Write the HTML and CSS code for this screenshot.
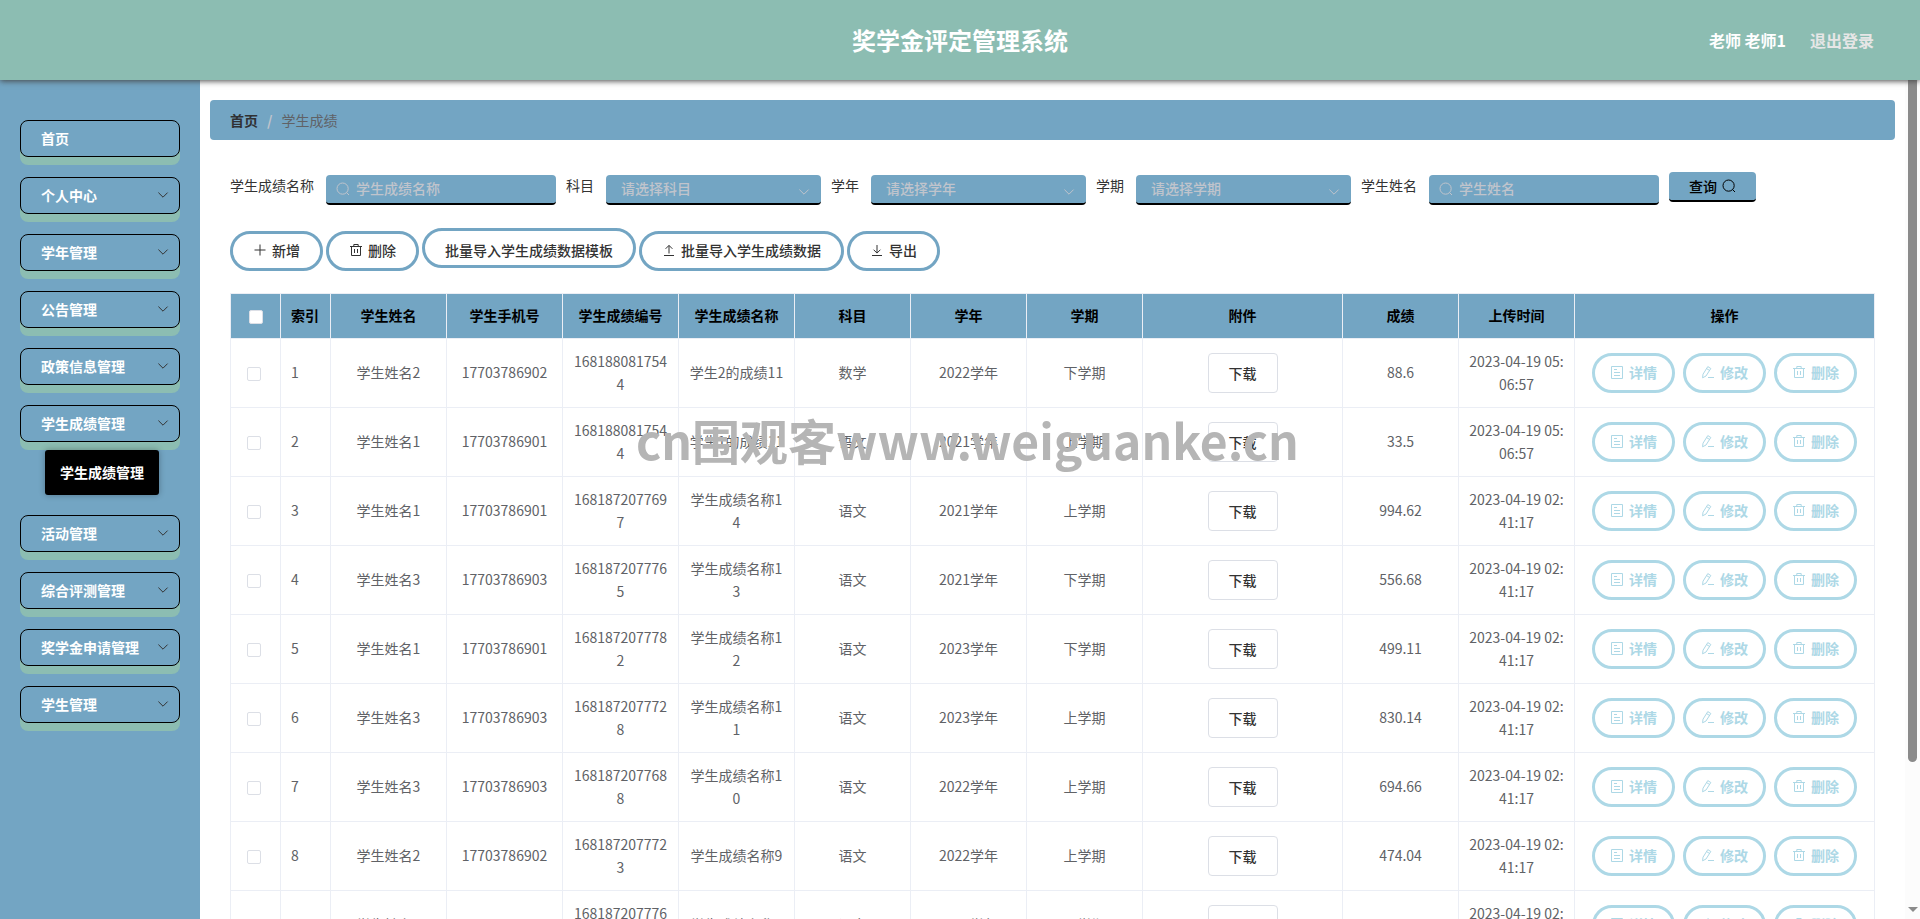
FILE: index.html
```html
<!DOCTYPE html>
<html lang="zh-CN">
<head>
    <meta charset="UTF-8">
    <meta name="viewport" content="width=device-width, initial-scale=1.0">
    <title>奖学金评定管理系统</title>
    <link rel="stylesheet" href="styles.css">
</head>
<body>
    <svg class="sprite" aria-hidden="true">
        <symbol id="i-down" viewBox="0 0 14 14"><path d="M2.4 4.6 7 9.2l4.6-4.6"/></symbol>
        <symbol id="i-search" viewBox="0 0 14 14"><circle cx="6.6" cy="6.6" r="5.6"/><path d="m10.6 10.6 2.4 2.4"/></symbol>
        <symbol id="i-plus" viewBox="0 0 14 14"><path d="M7 1.5v11M1.5 7h11"/></symbol>
        <symbol id="i-delete" viewBox="0 0 14 14"><path d="M1 3.5h12M4.8 3.5v-2h4.4v2M2.5 3.5v9h9v-9M5.5 6v4M8.5 6v4"/></symbol>
        <symbol id="i-upload" viewBox="0 0 14 14"><path d="M2 12.5h10M7 10.5v-8M3.6 5.8 7 2.4l3.4 3.4"/></symbol>
        <symbol id="i-download" viewBox="0 0 14 14"><path d="M2 12.5h10M7 2v8M3.6 6.7 7 10.1l3.4-3.4"/></symbol>
        <symbol id="i-tickets" viewBox="0 0 14 14"><path d="M1.5 1.5h11v12h-11zM4 4.5h3M4 7.5h6M4 10.5h6"/></symbol>
        <symbol id="i-edit" viewBox="0 0 14 14"><path d="M1.6 12.8 2 9.2l4.8-7.6 3 1.9L5 11zM5.6 3.6l3 1.9M7 12.5h6"/></symbol>
    </svg>

    <header class="header">
        <h1>奖学金评定管理系统</h1>
        <div class="user">
            <span>老师 老师1</span>
            <a href="#" class="logout">退出登录</a>
        </div>
    </header>

    <div class="layout">
        <nav class="sidebar">
            <a href="#" class="menu-item">首页</a>
            <button class="menu-item">个人中心<svg><use href="#i-down"/></svg></button>
            <button class="menu-item">学年管理<svg><use href="#i-down"/></svg></button>
            <button class="menu-item">公告管理<svg><use href="#i-down"/></svg></button>
            <button class="menu-item">政策信息管理<svg><use href="#i-down"/></svg></button>
            <div class="menu-group">
                <button class="menu-item">学生成绩管理<svg><use href="#i-down"/></svg></button>
                <a href="#" class="submenu-item">学生成绩管理</a>
            </div>
            <button class="menu-item">活动管理<svg><use href="#i-down"/></svg></button>
            <button class="menu-item">综合评测管理<svg><use href="#i-down"/></svg></button>
            <button class="menu-item">奖学金申请管理<svg><use href="#i-down"/></svg></button>
            <button class="menu-item">学生管理<svg><use href="#i-down"/></svg></button>
        </nav>

        <main class="main">
            <div class="breadcrumb">
                <a href="#">首页</a>
                <span class="separator">/</span>
                <span>学生成绩</span>
            </div>

            <div class="content">
                <form class="search-form">
                    <div class="field">
                        <label for="score-name">学生成绩名称</label>
                        <span class="control text-control">
                            <svg><use href="#i-search"/></svg>
                            <input type="text" id="score-name" placeholder="学生成绩名称">
                        </span>
                    </div>
                    <div class="field">
                        <label for="subject">科目</label>
                        <span class="control select-control">
                            <select id="subject"><option>请选择科目</option><option>语文</option><option>数学</option></select>
                            <svg><use href="#i-down"/></svg>
                        </span>
                    </div>
                    <div class="field">
                        <label for="year">学年</label>
                        <span class="control select-control">
                            <select id="year"><option>请选择学年</option><option>2021学年</option><option>2022学年</option><option>2023学年</option></select>
                            <svg><use href="#i-down"/></svg>
                        </span>
                    </div>
                    <div class="field">
                        <label for="term">学期</label>
                        <span class="control select-control">
                            <select id="term"><option>请选择学期</option><option>上学期</option><option>下学期</option></select>
                            <svg><use href="#i-down"/></svg>
                        </span>
                    </div>
                    <div class="field">
                        <label for="student-name">学生姓名</label>
                        <span class="control text-control">
                            <svg><use href="#i-search"/></svg>
                            <input type="text" id="student-name" placeholder="学生姓名">
                        </span>
                    </div>
                    <button type="submit" class="search-button">查询<svg><use href="#i-search"/></svg></button>
                </form>

                <div class="toolbar">
                    <button class="pill"><svg><use href="#i-plus"/></svg>新增</button>
                    <button class="pill"><svg><use href="#i-delete"/></svg>删除</button>
                    <a href="#" class="pill template-link">批量导入学生成绩数据模板</a>
                    <button class="pill"><svg><use href="#i-upload"/></svg>批量导入学生成绩数据</button>
                    <button class="pill"><svg><use href="#i-download"/></svg>导出</button>
                </div>

                <table class="table">
                    <colgroup>
                        <col class="col-small"><col class="col-small">
                        <col><col><col><col><col><col><col>
                        <col class="col-file"><col><col>
                        <col class="col-actions">
                    </colgroup>
                    <thead>
                        <tr>
                            <th class="check-all"><input type="checkbox" aria-label="全选"></th>
                            <th class="left">索引</th>
                            <th>学生姓名</th>
                            <th>学生手机号</th>
                            <th>学生成绩编号</th>
                            <th>学生成绩名称</th>
                            <th>科目</th>
                            <th>学年</th>
                            <th>学期</th>
                            <th>附件</th>
                            <th>成绩</th>
                            <th>上传时间</th>
                            <th>操作</th>
                        </tr>
                    </thead>
                    <tbody id="rows"></tbody>
                </table>
            </div>
        </main>

        <div class="scrollbar" aria-hidden="true">
            <div class="scrollbar-thumb"></div>
            <div class="scrollbar-arrow"></div>
        </div>
    </div>

    <div class="watermark">cn围观客www.weiguanke.cn</div>

    <script>
        const scores = [
            ['学生姓名2', '17703786902', '1681880817544', '学生2的成绩11', '数学', '2022学年', '下学期', '88.6', '2023-04-19 05:06:57'],
            ['学生姓名1', '17703786901', '1681880817544', '学生1的成绩11', '语文', '2021学年', '上学期', '33.5', '2023-04-19 05:06:57'],
            ['学生姓名1', '17703786901', '1681872077697', '学生成绩名称14', '语文', '2021学年', '上学期', '994.62', '2023-04-19 02:41:17'],
            ['学生姓名3', '17703786903', '1681872077765', '学生成绩名称13', '语文', '2021学年', '下学期', '556.68', '2023-04-19 02:41:17'],
            ['学生姓名1', '17703786901', '1681872077782', '学生成绩名称12', '语文', '2023学年', '下学期', '499.11', '2023-04-19 02:41:17'],
            ['学生姓名3', '17703786903', '1681872077728', '学生成绩名称11', '语文', '2023学年', '上学期', '830.14', '2023-04-19 02:41:17'],
            ['学生姓名3', '17703786903', '1681872077688', '学生成绩名称10', '语文', '2022学年', '上学期', '694.66', '2023-04-19 02:41:17'],
            ['学生姓名2', '17703786902', '1681872077723', '学生成绩名称9', '语文', '2022学年', '上学期', '474.04', '2023-04-19 02:41:17'],
            ['学生姓名2', '17703786902', '1681872077762', '学生成绩名称8', '语文', '2021学年', '下学期', '612.35', '2023-04-19 02:41:17']
        ];

        document.getElementById('rows').innerHTML = scores.map(function(row, index) {
            const cells = row.map(value => `<td>${value}</td>`);
            // the attachment column sits before the score
            cells.splice(7, 0, '<td><button class="download">下载</button></td>');
            return `<tr>
                <td class="check"><input type="checkbox" aria-label="选择第${index + 1}行"></td>
                <td class="left">${index + 1}</td>
                ${cells.join('')}
                <td><div class="actions">
                    <button class="pill light"><svg><use href="#i-tickets"/></svg>详情</button>
                    <button class="pill light"><svg><use href="#i-edit"/></svg>修改</button>
                    <button class="pill light"><svg><use href="#i-delete"/></svg>删除</button>
                </div></td>
            </tr>`;
        }).join('');
    </script>
</body>
</html>
```
FILE: styles.css
```css
* {
    box-sizing: border-box;
}

body {
    margin: 0;
    height: 100vh;
    display: flex;
    flex-direction: column;
    overflow: hidden;
    font-family: "Noto Sans CJK SC", sans-serif;
    font-size: 14px;
    color: #333;
    background-color: #fff;
}

a {
    color: inherit;
    text-decoration: none;
}

button, input, select {
    margin: 0;
    font-family: inherit;
    font-size: 14px;
}

button {
    cursor: pointer;
}

svg {
    width: 14px;
    height: 14px;
    flex: none;
    fill: none;
    stroke: currentColor;
}

.sprite {
    display: none;
}

/* header */
.header {
    flex: none;
    height: 80px;
    padding: 0 46px;
    display: grid;
    grid-template-columns: 1fr auto 1fr;
    align-items: center;
    background-color: #8cbdb2;
    box-shadow: 0 1px 6px #444;
    color: #fff;
    z-index: 2;
}

.header h1 {
    grid-column: 2;
    margin: 0;
    padding-bottom: 2px;
    font-size: 24px;
    font-weight: 700;
}

.user {
    display: flex;
    justify-content: flex-end;
    gap: 24px;
    font-size: 16px;
    font-weight: 700;
}

.logout {
    color: #e6e6e6;
}

.layout {
    flex: 1;
    min-height: 0;
    display: flex;
}

/* sidebar */
.sidebar {
    flex: none;
    width: 200px;
    padding: 40px 20px;
    display: flex;
    flex-direction: column;
    gap: 20px;
    background-color: #73a5c3;
}

.menu-item {
    width: 100%;
    height: 37px;
    padding: 0 9px 2px 20px;
    display: flex;
    align-items: center;
    justify-content: space-between;
    border: 1px solid #000;
    border-radius: 8px;
    background-color: #73a5c3;
    box-shadow: 0 8px 0 #8cbdb2;
    color: #fff;
    font-weight: 700;
}

.menu-item svg {
    color: #333;
}

.menu-group {
    display: flex;
    flex-direction: column;
    align-items: center;
    gap: 8px;
}

.submenu-item {
    margin-left: 4px;
    padding: 0 15px;
    line-height: 45px;
    border-radius: 3px;
    background-color: #000;
    box-shadow: 0 0 6px rgba(0, 0, 0, 0.3);
    color: #fff;
    font-weight: 700;
    z-index: 1;
}

/* main */
.main {
    flex: 1;
    min-width: 0;
    padding: 20px 10px;
    overflow: hidden;
}

.breadcrumb {
    height: 40px;
    padding: 0 20px;
    display: flex;
    align-items: center;
    gap: 9px;
    border-radius: 4px;
    background-color: #73a5c3;
    color: #606266;
}

.breadcrumb a {
    color: #303133;
    font-weight: 700;
}

.separator {
    color: #c0c4cc;
    font-weight: 700;
}

.content {
    padding: 32px 20px 0;
}

.search-form {
    display: flex;
    flex-wrap: wrap;
    gap: 10px;
}

.field {
    display: flex;
    gap: 12px;
    line-height: 26px;
}

.control {
    position: relative;
    margin-top: 3px;
    color: #c0c4cc;
}

.control input,
.control select {
    display: block;
    width: 100%;
    height: 30px;
    border: none;
    border-bottom: 2px solid #000;
    border-radius: 4px;
    background-color: #73a5c3;
    color: #c0c4cc;
    font-weight: 500;
    appearance: none;
}

.control input::placeholder {
    color: #c0c4cc;
}

.text-control {
    width: 230px;
}

.text-control input {
    padding: 0 10px 2px 30px;
}

.text-control svg {
    position: absolute;
    left: 10px;
    top: 7px;
}

.select-control {
    width: 215px;
}

.select-control select {
    padding: 0 30px 2px 15px;
}

.select-control svg {
    position: absolute;
    right: 10px;
    top: 10px;
}

.search-button {
    width: 87px;
    height: 30px;
    padding: 0;
    display: flex;
    align-items: center;
    justify-content: center;
    gap: 5px;
    border: none;
    border-bottom: 2px solid #000;
    border-radius: 4px;
    background-color: #73a5c3;
    color: #000;
    font-weight: 500;
}

.toolbar {
    display: flex;
    gap: 3px;
    margin: 23px 0 22px;
    align-items: flex-end;
}

.pill {
    height: 40px;
    padding: 0 20px 2px;
    display: flex;
    align-items: center;
    gap: 5px;
    border: 3px solid #73a5c3;
    border-radius: 20px;
    background-color: #fff;
    color: #333;
    font-weight: 500;
}

.template-link {
    margin-bottom: 3px;
    padding-top: 6px;
}

/* table */
.table {
    width: 100%;
    table-layout: fixed;
    border-spacing: 0;
    border-top: 1px solid #ebeef5;
    border-left: 1px solid #ebeef5;
    line-height: 23px;
}

.col-small {
    width: 50px;
}

.col-file {
    width: 200px;
}

.col-actions {
    width: 300px;
}

.table th,
.table td {
    padding: 0 10px 1px;
    border-right: 1px solid #ebeef5;
    border-bottom: 1px solid #ebeef5;
    text-align: center;
    word-break: break-all;
}

.table th {
    height: 45px;
    background-color: #73a5c3;
    color: #000;
    font-weight: 700;
}

.table td {
    height: 69px;
    color: #606266;
}

.table .left {
    text-align: left;
}

.table .check {
    padding: 2px 16px 0;
}

.table .check-all {
    padding: 2px 18px 0;
}

.table input {
    display: block;
    width: 14px;
    height: 14px;
    border: 1px solid #dcdfe6;
    border-radius: 2px;
    background-color: #fff;
    appearance: none;
}

.download {
    height: 40px;
    padding: 0 20px;
    border: 1px solid #dcdfe6;
    border-radius: 4px;
    background-color: #fff;
    color: #333;
    font-weight: 500;
}

.actions {
    display: flex;
    justify-content: center;
    gap: 8px;
}

.light {
    padding: 0 15px 2px;
    border-color: #add8e6;
    color: #add8e6;
    font-weight: 700;
}

/* scrollbar */
.scrollbar {
    flex: none;
    width: 15px;
    padding-bottom: 7px;
    display: flex;
    flex-direction: column;
    align-items: center;
    justify-content: space-between;
    background-color: #fcfcfc;
}

.scrollbar-thumb {
    width: 9px;
    height: 82%;
    border-radius: 0 0 5px 5px;
    background-color: #8b8b8b;
}

.scrollbar-arrow {
    border: 5px solid transparent;
    border-top-color: #8b8b8b;
    border-bottom: none;
}

.watermark {
    position: fixed;
    top: 407px;
    left: 636px;
    color: #b5b5b5;
    font-size: 48px;
    font-weight: 700;
    line-height: 64px;
    white-space: nowrap;
    pointer-events: none;
    z-index: 3;
}
```
